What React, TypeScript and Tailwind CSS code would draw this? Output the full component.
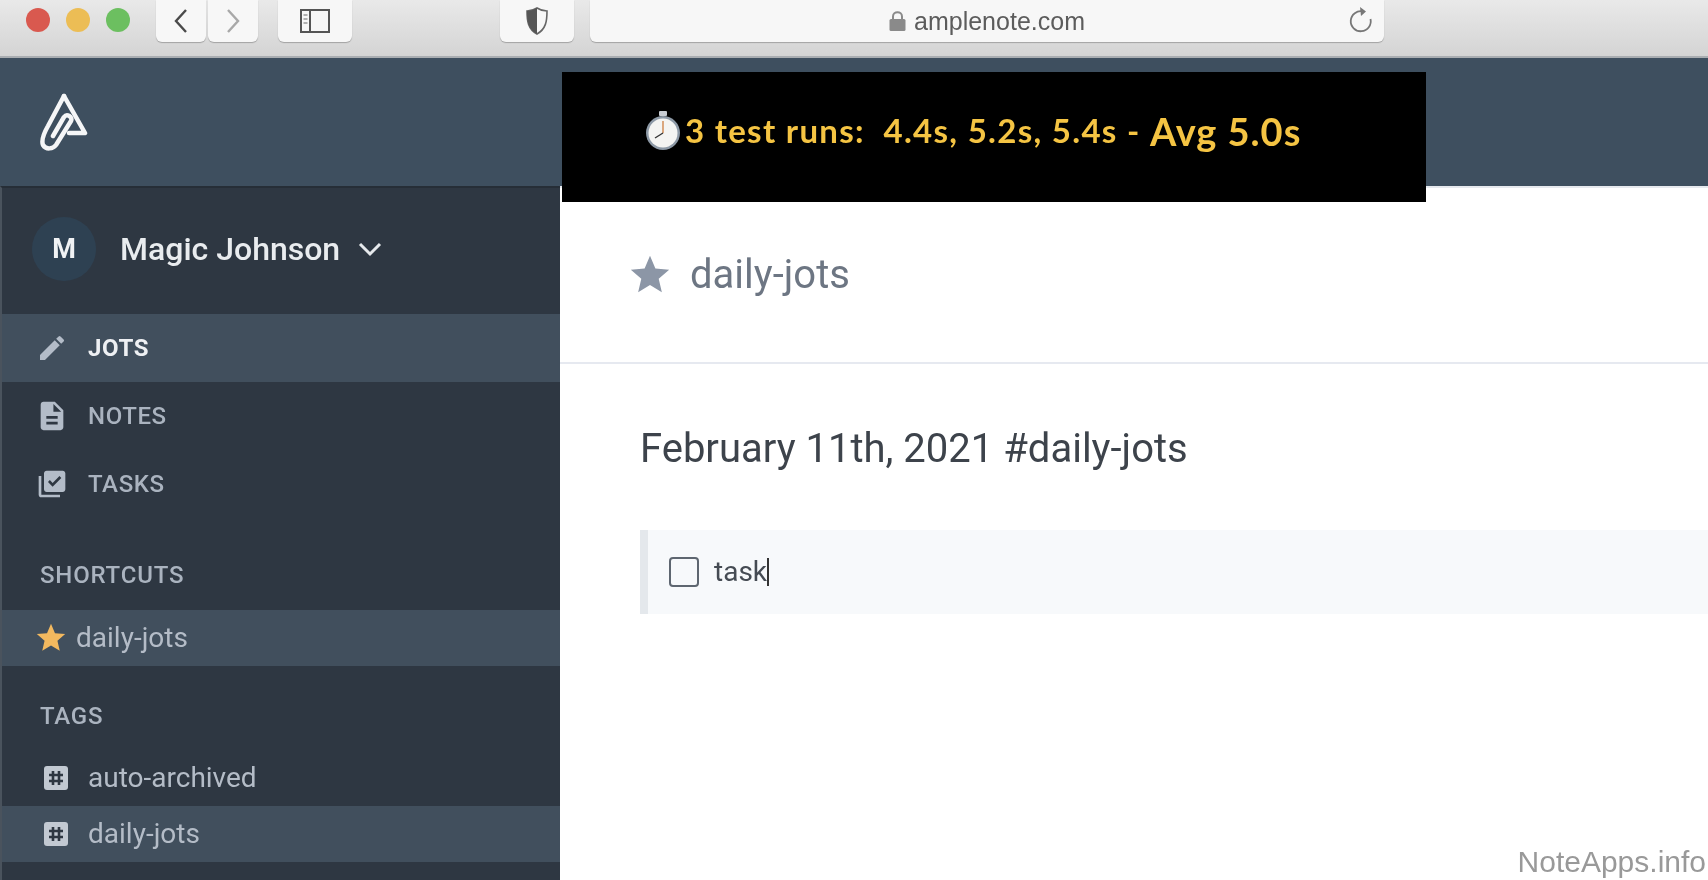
import React from "react";
import { MdEdit, MdDescription, MdLibraryAddCheck, MdStar } from "react-icons/md";

const roboto = "font-['Roboto',sans-serif]";

function ToolButton({ className, children }: { className: string; children: React.ReactNode }) {
  return (
    <div className={"h-[42px] flex items-center justify-center bg-[#f7f7f7] rounded-b-[6px] shadow-[0_1px_1px_rgba(0,0,0,0.25)] " + className}>
      {children}
    </div>
  );
}

function Chrome() {
  return (
    <div className="h-[58px] shrink-0 flex items-start bg-gradient-to-b from-[#e9e9e9] to-[#d4d4d4] border-b-2 border-[#a9adb1]">
      <div className="flex gap-[16px] ml-[26px] mt-[8px]">
        <div className="w-[24px] h-[24px] rounded-full bg-[#d9594f]" />
        <div className="w-[24px] h-[24px] rounded-full bg-[#ecbd55]" />
        <div className="w-[24px] h-[24px] rounded-full bg-[#6cbf60]" />
      </div>
      <ToolButton className="w-[50px] ml-[26px]">
        <svg width="16" height="26" viewBox="0 0 16 26" fill="none" stroke="#4a4a4a" strokeWidth="2.4"><path d="M13 2 L3 13 L13 24" /></svg>
      </ToolButton>
      <ToolButton className="w-[50px] ml-[2px]">
        <svg width="16" height="26" viewBox="0 0 16 26" fill="none" stroke="#a8a8a8" strokeWidth="2.4"><path d="M3 2 L13 13 L3 24" /></svg>
      </ToolButton>
      <ToolButton className="w-[74px] ml-[20px]">
        <svg width="30" height="24" viewBox="0 0 30 24" fill="none" stroke="#555" strokeWidth="2"><rect x="1" y="1" width="28" height="22" /><path d="M10 1 V23" /><path d="M3.5 6 H7.5 M3.5 10 H7.5 M3.5 14 H7.5" strokeWidth="1.4" stroke="#999" /></svg>
      </ToolButton>
      <ToolButton className="w-[74px] ml-[148px]">
        <svg width="24" height="28" viewBox="0 0 24 28"><path d="M12 1 C9 3 5 4 2 4 C2 14 3 22 12 27 C21 22 22 14 22 4 C19 4 15 3 12 1 Z" fill="none" stroke="#666" strokeWidth="1.6" /><path d="M12 1 C9 3 5 4 2 4 C2 14 3 22 12 27 Z" fill="#555" /></svg>
      </ToolButton>
      <ToolButton className="w-[794px] ml-[16px] relative">
        <div className="flex items-center gap-[8px]">
          <svg width="17" height="20" viewBox="0 0 17 20"><rect x="0.5" y="8" width="16" height="12" rx="1.5" fill="#8a8a8a" /><path d="M4 9 V5.5 C4 -0.2 13 -0.2 13 5.5 V9" fill="none" stroke="#8a8a8a" strokeWidth="2" /></svg>
          <span className="font-['Liberation_Sans',sans-serif] text-[25px] leading-none text-[#5c5c5c]">amplenote.com</span>
        </div>
        <svg className="absolute right-[11px] top-[6px]" width="24" height="28" viewBox="0 0 24 28" fill="none" stroke="#777" strokeWidth="1.8"><path d="M14 5.5 A10 10 0 1 0 21.5 13" /><path d="M11 1 L17 5.5 L12 10" fill="#777" stroke="none" /></svg>
      </ToolButton>
    </div>
  );
}

function NavRow({ icon, label, active, bold }: { icon: React.ReactNode; label: string; active?: boolean; bold?: boolean }) {
  return (
    <div className={"h-[68px] flex items-center " + (active ? "bg-[#414f5d]" : "")}>
      <div className="w-[86px] flex justify-center pl-[24px] pr-[10px] text-[#b3bcc8]">{icon}</div>
      <span className={"text-[24px] tracking-[0.6px] " + (bold ? "font-bold text-[#eef0f3]" : "font-medium text-[#aab3bf]")}>{label}</span>
    </div>
  );
}

function TagIcon() {
  return (
    <svg width="24" height="24" viewBox="0 0 24 24">
      <rect width="24" height="24" rx="3" fill="#c2c9d2" />
      <path d="M9 5 V19 M15 5 V19 M5 9 H19 M5 15 H19" stroke="#2e3742" strokeWidth="2.6" />
    </svg>
  );
}

function TagRow({ label, active }: { label: string; active?: boolean }) {
  return (
    <div className={"h-[56px] flex items-center pl-[42px] gap-[20px] " + (active ? "bg-[#414f5d]" : "")}>
      <TagIcon />
      <span className="text-[28px] text-[#b4bcc7]">{label}</span>
    </div>
  );
}

function Sidebar() {
  return (
    <div className="w-[560px] shrink-0 bg-[#2e3742] border-l-2 border-[#4a535d] border-t-2 border-t-[#262e37] overflow-hidden">
      <div className="h-[126px] flex items-center pl-[30px] pb-[4px]">
        <div className="w-[64px] h-[64px] rounded-full bg-[#2e4152] flex items-center justify-center text-[#f0f2f4] text-[27px] font-bold">M</div>
        <span className="ml-[24px] text-[32px] font-medium text-[#e9ecef]">Magic Johnson</span>
        <svg className="ml-[18px]" width="24" height="16" viewBox="0 0 24 16" fill="none" stroke="#e6e9ec" strokeWidth="3"><path d="M2 3 L12 13 L22 3" /></svg>
      </div>
      <NavRow active bold label="JOTS" icon={<MdEdit size={32} />} />
      <NavRow label="NOTES" icon={<MdDescription size={34} />} />
      <NavRow label="TASKS" icon={<MdLibraryAddCheck size={32} />} />
      <div className="h-[92px] flex items-end pl-[38px] pb-[17px]">
        <span className="text-[24px] font-medium tracking-[0.8px] text-[#aab3bf]">SHORTCUTS</span>
      </div>
      <div className="h-[56px] flex items-center bg-[#414f5d] pl-[32px] gap-[8px]">
        <MdStar size={34} className="text-[#f3b95f]" />
        <span className="text-[28px] text-[#b4bcc7]">daily-jots</span>
      </div>
      <div className="h-[84px] flex items-start pl-[38px] pt-[36px]">
        <span className="text-[24px] font-medium tracking-[0.8px] text-[#aab3bf] leading-[28px]">TAGS</span>
      </div>
      <TagRow label="auto-archived" />
      <TagRow active label="daily-jots" />
    </div>
  );
}

function Stopwatch() {
  return (
    <svg width="36" height="40" viewBox="0 0 36 40">
      <rect x="14" y="0" width="8" height="5" rx="1" fill="#c8ccd2" />
      <circle cx="18" cy="22" r="17" fill="#8d99a6" />
      <circle cx="18" cy="22" r="14.5" fill="#f4f4f2" />
      <path d="M18 22 V10" stroke="#c9722f" strokeWidth="1.2" />
      <path d="M18 22 L10 27" stroke="#333" strokeWidth="1.4" />
    </svg>
  );
}

export default function App() {
  return (
    <div className={"relative w-[1708px] h-[880px] overflow-hidden bg-white flex flex-col blur-[0.4px] " + roboto}>
      <Chrome />
      <div className="h-[128px] shrink-0 bg-[#3e4f5f] flex items-center pl-[38px]">
        <svg width="50" height="58" viewBox="0 0 50 58" fill="none" stroke="#f5f6f7" strokeWidth="4.5" strokeLinejoin="round" strokeLinecap="round">
          <path d="M26 3 L47 40 H31" />
          <path d="M26 3 L10 33 C6 40 3 47 5 52 C8 57 15 56 18 52 L33 28 C35 24 29 20 26 24 L15 43" />
        </svg>
      </div>
      <div className="flex-1 flex min-h-0">
        <Sidebar />
        <div className="flex-1 min-w-0 flex flex-col bg-white">
          <div className="h-[178px] shrink-0 border-t-2 border-[#e6e9ee] border-b-2 border-b-[#e6e9f0] flex items-center pl-[67px]">
            <MdStar size={46} className="text-[#8c96a6]" />
            <span className="ml-[17px] text-[40px] text-[#6d7683]">daily-jots</span>
          </div>
          <div className="pl-[80px] pt-[58px]">
            <div className="text-[40px] leading-[54px] text-[#3d434b]">February 11th, 2021 #daily-jots</div>
            <div className="mt-[54px] h-[84px] bg-[#f7f9fb] border-l-[8px] border-[#e4e8ec] flex items-center pl-[21px]">
              <div className="w-[30px] h-[30px] rounded-[4px] border-[2.5px] border-[#5e6670]" />
              <span className="ml-[15px] text-[28px] text-[#454b53]">task</span>
              <span className="w-[1.5px] h-[28px] bg-[#333]" />
            </div>
          </div>
        </div>
      </div>
      <div className="absolute left-[562px] top-[72px] w-[864px] h-[130px] bg-black flex items-center pl-[83px] pb-[12px] font-['Lato',sans-serif] font-bold text-[#f5c443] whitespace-pre">
        <Stopwatch />
        <span className="text-[33px] tracking-[1.3px] ml-[4px]">3 test runs:  4.4s, 5.2s, 5.4s - </span>
        <span className="text-[38px] tracking-[1px]">Avg 5.0s</span>
      </div>
      <div className="absolute right-[2px] bottom-[0px] font-['Liberation_Sans',sans-serif] text-[30px] leading-[36px] text-[#999]">NoteApps.info</div>
    </div>
  );
}
